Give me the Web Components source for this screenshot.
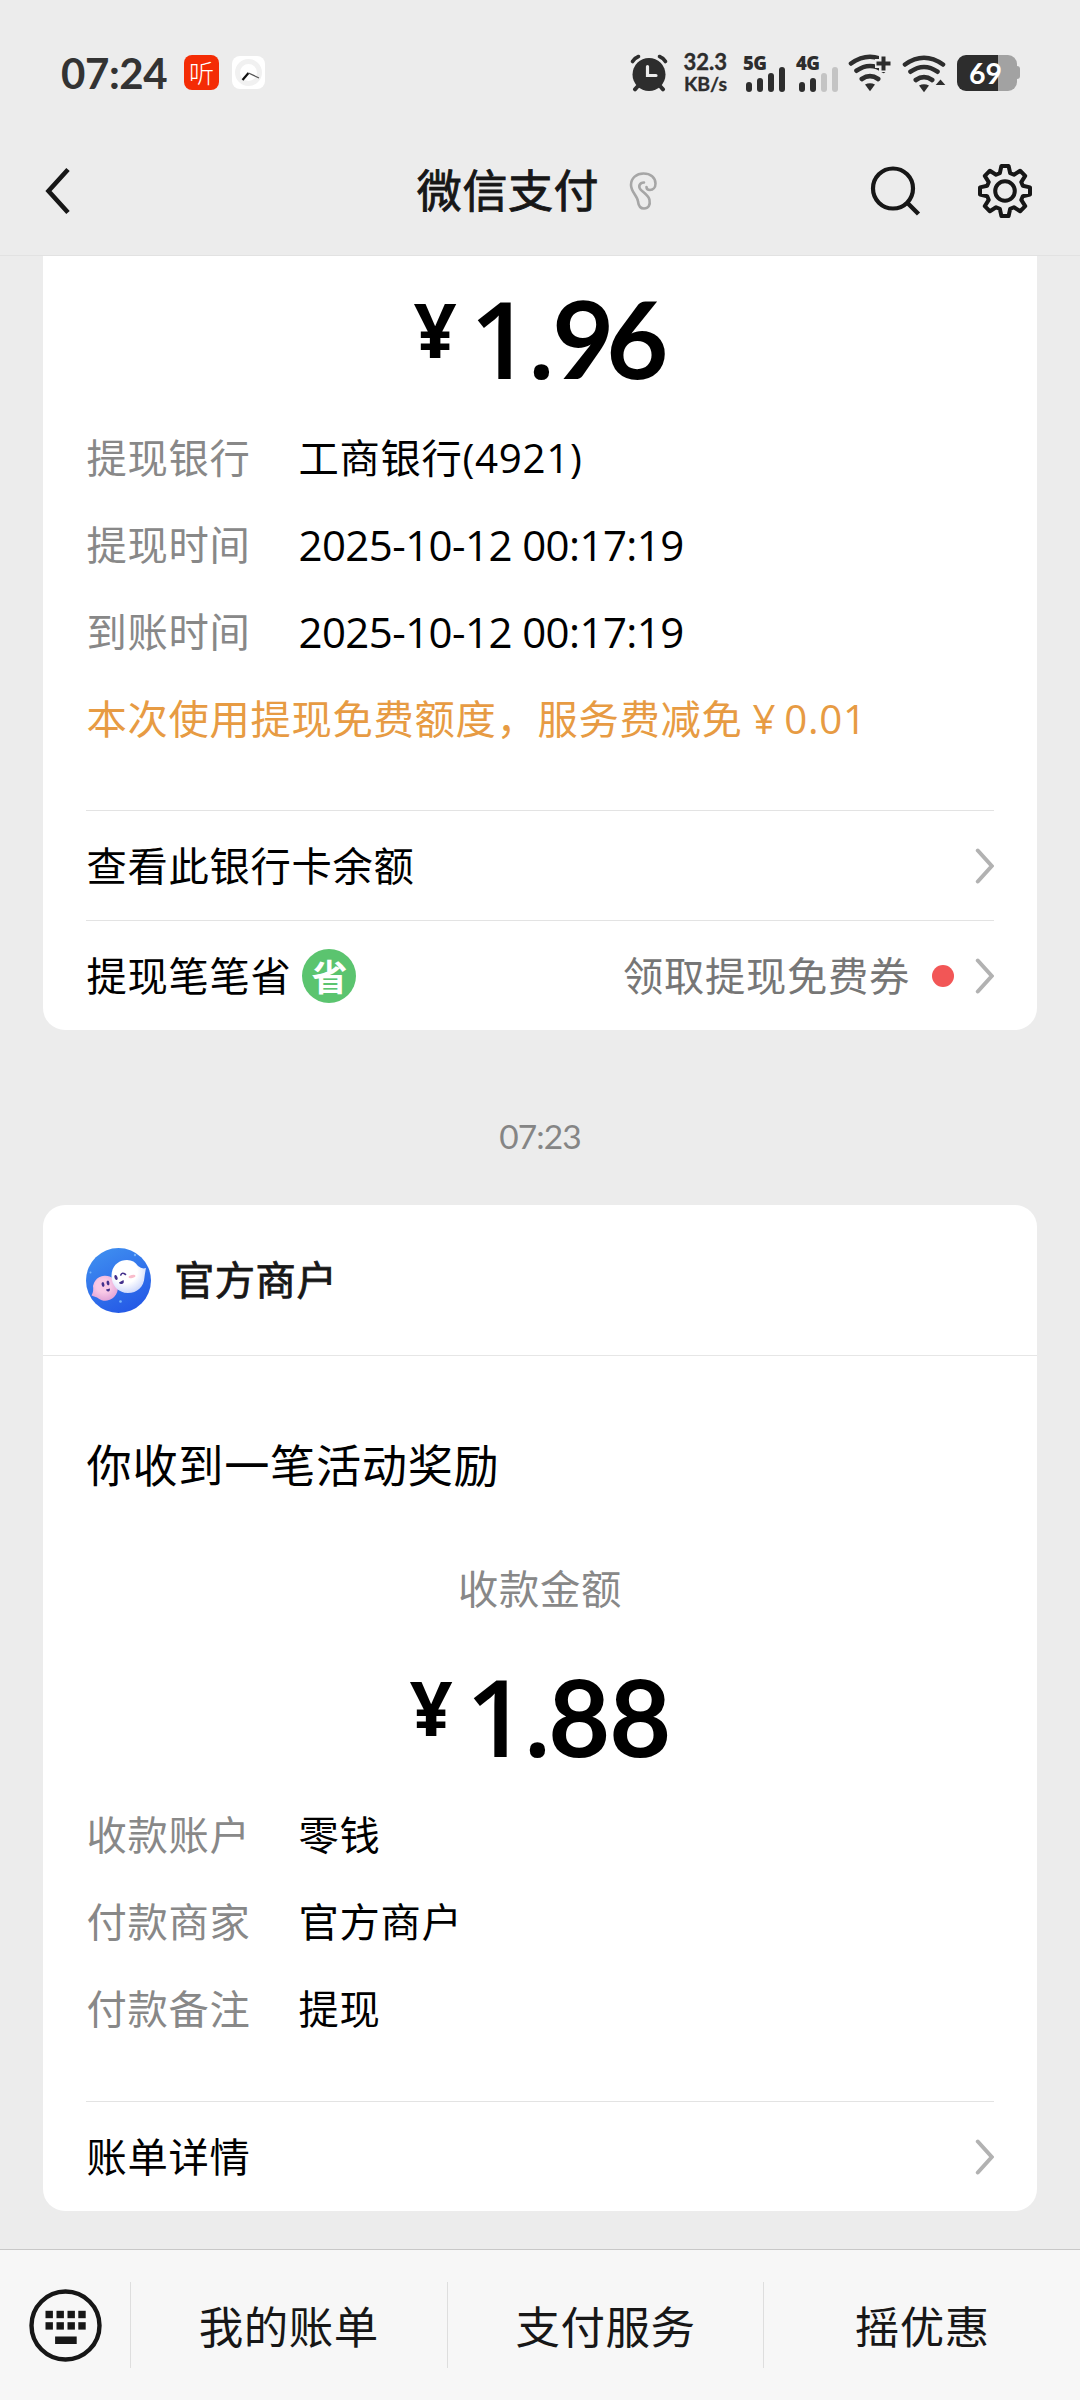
<!DOCTYPE html>
<html lang="zh-CN">
<head>
<meta charset="utf-8">
<title>微信支付</title>
<style>
html,body{margin:0;padding:0;background:#ececec}
body{width:1080px;height:2400px;overflow:hidden;font-family:"Open Sans","Noto Sans CJK SC",sans-serif;color:#000}
</style>
</head>
<body>
<phone-screen>
  <status-bar slot="status"></status-bar>
  <nav-bar slot="nav">微信支付</nav-bar>

  <pay-card cut>
    <money-amount style="height:158.5px;--top:28px;--track:-8px;--end:6px" currency="¥" value="1.96"></money-amount>
    <info-row label="提现银行">工商银行(4921)</info-row>
    <info-row label="提现时间" numeric>2025-10-12 00:17:19</info-row>
    <info-row label="到账时间" numeric>2025-10-12 00:17:19</info-row>
    <note-row>本次使用提现免费额度，服务费减免<span style="margin:0 8px 0 10px">¥</span>0.01</note-row>
    <link-row slot="links">查看此银行卡余额</link-row>
    <link-row slot="links">提现笔笔省<save-badge></save-badge><span slot="extra">领取提现免费券</span><red-dot slot="extra"></red-dot></link-row>
  </pay-card>

  <time-stamp>07:23</time-stamp>

  <pay-card>
    <merchant-head slot="head">官方商户</merchant-head>
    <card-title>你收到一笔活动奖励</card-title>
    <amount-label>收款金额</amount-label>
    <money-amount style="height:171.5px;--top:42px;--track:-1px;--end:0px" currency="¥" value="1.88"></money-amount>
    <info-row label="收款账户">零钱</info-row>
    <info-row label="付款商家">官方商户</info-row>
    <info-row label="付款备注">提现</info-row>
    <link-row slot="links">账单详情</link-row>
  </pay-card>

  <bottom-menu slot="menu">
    <menu-item>我的账单</menu-item>
    <menu-item>支付服务</menu-item>
    <menu-item>摇优惠</menu-item>
  </bottom-menu>
</phone-screen>

<script>
const define = (name, render) => customElements.define(name, class extends HTMLElement {
  constructor() {
    super();
    this.attachShadow({ mode: 'open' });
  }
  connectedCallback() {
    this.shadowRoot.innerHTML = render(this);
  }
});

define('phone-screen', () => `
<style>
:host{display:flex;flex-direction:column;width:1080px;height:2400px;background:#ececec}
main{flex:1;min-height:0;overflow:hidden;display:flex;flex-direction:column}
</style>
<slot name="status"></slot><slot name="nav"></slot>
<main><slot></slot></main>
<slot name="menu"></slot>`);

const wifi = (extra) => `<svg width="48" height="40" viewBox="0 0 48 40" fill="none" stroke="#2d2d2d" stroke-width="4.6" stroke-linecap="round">
<path d="M4 10.5Q23-3 42 10.5M9.5 17.7Q23 8.3 36.5 17.7M14.8 26Q23 20.4 31.2 26"/>
<path d="M18 31.5Q23 28.800 28 31.500L23 38.300Z" fill="#2d2d2d" stroke="none"/>${extra}</svg>`;

define('signal-bars', (el) => {
  const on = +el.getAttribute('level');
  const h = [10, 14, 18.5, 24.5];
  return `
<style>
:host{display:flex;flex-direction:column;width:43px;height:38px;position:relative}
b{font:800 18.500px/18px "Open Sans";color:#2d2d2d;letter-spacing:-.6px}
div{position:absolute;left:3px;bottom:0;display:flex;align-items:flex-end;gap:5px}
i{width:6px;border-radius:3px;background:#2d2d2d}
i.off{background:#c4c4c4}
</style>
<b>${el.getAttribute('net')}</b>
<div>${h.map((v, n) => `<i class="${n < on ? '' : 'off'}" style="height:${v}px"></i>`).join('')}</div>`;
});

define('status-bar', () => `
<style>
:host{display:flex;align-items:center;height:127px;box-sizing:border-box;padding:18px 60px 0 61px;color:#333}
.clock{font:700 42px/50px Lato;width:105px;letter-spacing:-.4px;white-space:nowrap}
.app{width:35px;height:35px;border-radius:8px;background:#f42c05;margin-left:18px;display:flex;align-items:center;justify-content:center;color:#fff;font:300 25px/35px "Noto Sans CJK SC"}
.watch{margin-left:13px}
.right{margin-left:auto;display:flex;align-items:center}
.rate{font:700 19.500px/22px Lato;color:#2d2d2d;text-align:right;width:46px;margin-left:13px;white-space:nowrap;display:flex;flex-direction:column;align-items:flex-end}
.rate div:first-child{font-size:22px;line-height:23px;-webkit-text-stroke:.4px #2d2d2d}
.rate div:last-child{-webkit-text-stroke:.3px #2d2d2d}
.bat{display:flex;align-items:center;width:63px;margin-left:8px}
.cell{width:60px;height:36px;border-radius:9px;background:linear-gradient(90deg,#2d2d2d 41px,#a2a2a2 41px);color:#fff;font:700 28.500px/36px Lato;text-align:center;text-indent:-3px}
.nub{width:3px;height:13px;border-radius:0 4px 4px 0;background:#a2a2a2}
</style>
<span class="clock">07:24</span>
<span class="app">听</span>
<svg class="watch" width="33" height="33" viewBox="0 0 33 33"><rect width="33" height="33" rx="8" fill="#fff"/><circle cx="16.500" cy="16.500" r="11" fill="none" stroke="#f1f1f1" stroke-width="5"/><path d="M10.500 24L16.500 17" stroke="#111" stroke-width="2.200"/><path d="M16.500 17L27 22" stroke="#555" stroke-width="1.300"/></svg>
<div class="right">
<svg width="38" height="38" viewBox="0 0 38 38" fill="none" stroke="#2d2d2d" stroke-linecap="round"><circle cx="19" cy="20.500" r="16.500" fill="#2d2d2d" stroke="none"/><path d="M2.500 7.500Q4.500 4 8.500 2.500M35.500 7.500Q33.500 4 29.500 2.500" stroke-width="3.600"/><path d="M8 32L5 35.300M30 32L33 35.300" stroke-width="4"/><path d="M17.500 12.500V21.500H26" stroke="#ececec" stroke-width="3.200"/></svg>
<div class="rate"><div>32.3</div><div>KB/s</div></div>
<signal-bars net="5G" level="4" style="margin-left:16px"></signal-bars>
<signal-bars net="4G" level="2" style="margin-left:10px"></signal-bars>
<span style="display:flex;margin-left:8px">${wifi('<path d="M36.500 2V19M28 10.500H45" stroke="#ececec" stroke-width="9" stroke-linecap="butt"/><path d="M36.500 3.500V17.500M29.500 10.500H43.500" stroke-width="4" stroke-linecap="butt"/>')}</span>
<span style="display:flex;margin-left:6px;padding-top:2px">${wifi('<path d="M39 28L33 34.500H46Z" fill="#ececec" stroke="#ececec" stroke-width="3"/><path d="M39.500 25.500L44.300 31H34.700Z" fill="#2d2d2d" stroke="none"/>')}</span>
<div class="bat"><div class="cell">69</div><div class="nub"></div></div>
</div>`);

const gear = () => {
  const pts = [];
  for (let k = 0; k < 8; k++) {
    const a = k * Math.PI / 4;
    for (const [x, y] of [[-5.2, -17.8], [-3.6, -25], [3.6, -25], [5.2, -17.8]]) {
      pts.push((x * Math.cos(a) - y * Math.sin(a)).toFixed(2) + ',' + (x * Math.sin(a) + y * Math.cos(a)).toFixed(2));
    }
  }
  return pts.join(' ');
};

define('nav-bar', () => `
<style>
:host{display:grid;grid-template-columns:1fr auto 1fr;align-items:center;height:129px;box-sizing:border-box;border-bottom:1px solid #e2e2e2;color:#171717}
.back{margin-left:44px}
.title{display:flex;align-items:center;font-size:45px;letter-spacing:.6px;line-height:60px;-webkit-text-stroke:.9px #171717;padding:0 3px 1px 0}
.ear{margin-left:30px;width:31px}
.actions{display:flex;justify-content:flex-end;align-items:center;gap:55px;padding-right:46px}
svg{display:block;fill:none;stroke:#171717}
</style>
<svg class="back" width="30" height="50" viewBox="0 0 30 50" stroke-width="4.600"><path d="M24 3.500L4.500 25L24 46.500"/></svg>
<div class="title"><slot></slot>
<svg class="ear" width="31" height="40" viewBox="0 0 31 40" style="stroke:#a6a6a6" stroke-width="2.600" stroke-linecap="round"><path d="M15 11.500C10.500 11.500 9 15.500 11.500 18.500C14 21.500 19.500 24 20.500 29C21.500 34 19.500 37.500 15 37.500C10.500 37.500 9.500 34.500 9 30.500C8.500 25 2 21 2 14C2 7 7.500 2.500 14.500 2.500C21.500 2.500 26.500 6.500 26.500 12.500C26.500 16.500 24 19 21 19C18.500 19 17.500 17.500 17.500 16"/></svg></div>
<div class="actions">
<svg width="52" height="52" viewBox="0 0 52 52" stroke-width="4.200"><circle cx="24" cy="23.500" r="20"/><path d="M38.500 38L49.500 49" stroke-width="4.400"/></svg>
<svg width="58" height="58" viewBox="-29 -29 58 58" stroke-width="4" stroke-linejoin="round"><polygon points="${gear()}"/><circle r="9.800"/></svg>
</div>`);

define('pay-card', (el) => `
<style>
:host{display:flex;flex-direction:column;margin:0 43px;background:#fff;border-radius:${el.hasAttribute('cut') ? '0 0 22px 22px' : '22px'};flex:none}
.body,.links{display:flex;flex-direction:column;padding:0 43px}
.links{padding-top:${el.hasAttribute('cut') ? 47.5 : 48.5}px}
</style>
<slot name="head"></slot>
<div class="body"><slot></slot></div>
<div class="links"><slot name="links"></slot></div>`);

define('money-amount', (el) => {
  const [whole, cents] = el.getAttribute('value').split('.');
  return `
<style>
:host{display:flex;justify-content:center;align-items:flex-start;box-sizing:border-box;padding-top:var(--top);font-weight:600}
.cur{font-size:75px;line-height:75px;font-weight:700;margin-top:7.500px;margin-right:13.500px;letter-spacing:-.5px}
.num{font-size:107px;line-height:107px;letter-spacing:-4px}
.cents{font-family:Lato;font-weight:700;letter-spacing:var(--track);margin-right:var(--end)}
</style>
<span class="cur">${el.getAttribute('currency')}</span><span class="num">${whole}.<span class="cents">${cents}</span></span>`;
});

define('info-row', (el) => `
<style>
:host{display:flex;align-items:center;height:87px;box-sizing:border-box;padding:0 0 1px .5px;font-size:40.300px;letter-spacing:.7px;line-height:60px;white-space:nowrap}
.label{width:212px;color:#888}
.value{${el.hasAttribute('numeric') ? 'font-size:42px;letter-spacing:-.58px' : ''}}
</style>
<span class="label">${el.getAttribute('label')}</span><span class="value"><slot></slot></span>`);

define('note-row', () => `
<style>:host{display:block;height:87px;padding-left:.5px;font-size:40.300px;letter-spacing:.700px;line-height:85px;color:#e79b43;white-space:nowrap}</style><slot></slot>`);

define('link-row', () => `
<style>
:host{display:flex;align-items:center;height:110px;box-sizing:border-box;border-top:1px solid #e3e3e3;font-size:40.300px;letter-spacing:.700px;line-height:60px}
.main{display:flex;align-items:center;flex:1;padding:1px 0 0 .5px}
.extra{display:flex;align-items:center;color:#767676}
svg{display:block;margin-left:20px}
</style>
<span class="main"><slot></slot></span>
<span class="extra"><slot name="extra"></slot></span>
<svg width="20" height="38" viewBox="0 0 20 38" fill="none" stroke="#b2b2b2" stroke-width="4" stroke-linecap="round"><path d="M3.800 3.500L17.800 19L3.800 34.500"/></svg>`);

define('save-badge', () => `
<style>:host{display:flex;align-items:center;justify-content:center;width:54px;height:54px;border-radius:50%;background:#5bc46f;color:#fff;margin-left:11px;font:700 36px/50px "Noto Sans CJK SC";letter-spacing:0;padding-bottom:2px;box-sizing:border-box}</style>省`);

define('red-dot', () => `<style>:host{display:block;width:22px;height:22px;border-radius:50%;background:#f25656;margin-left:22px}</style>`);

define('time-stamp', () => `
<style>:host{display:block;flex:none;box-sizing:border-box;height:175px;padding-top:39px;text-align:center;color:#858585;font:400 33.500px/134px Lato;letter-spacing:-.9px}</style><slot></slot>`);

define('merchant-head', () => `
<style>
:host{display:flex;align-items:center;gap:23px;height:151px;box-sizing:border-box;padding-left:43px;border-bottom:1px solid #e6e6e6;font-size:40.300px;letter-spacing:.500px;line-height:60px;color:#171717;-webkit-text-stroke:.8px #171717}
</style>
<svg width="65" height="65" viewBox="0 0 65 65">
<defs><linearGradient id="sky" x1=".2" y1="0" x2=".7" y2="1"><stop offset="0" stop-color="#3f8ff0"/><stop offset="1" stop-color="#2458e6"/></linearGradient>
<radialGradient id="white" cx=".4" cy=".35" r=".7"><stop offset=".5" stop-color="#fff"/><stop offset="1" stop-color="#c9d4fb"/></radialGradient>
<radialGradient id="pink" cx=".45" cy=".4" r=".65"><stop offset=".4" stop-color="#f9c9e6"/><stop offset="1" stop-color="#dfa0d6"/></radialGradient></defs>
<circle cx="32.500" cy="32.500" r="32.500" fill="url(#sky)"/>
<path d="M5.500 47.500Q8 43 7 38A12.500 12.500 0 1 1 11 49.500Q8 48.500 5.500 47.500Z" fill="url(#pink)"/>
<path d="M52 18Q56 21.500 60 20Q59 25 58.500 29C58 39 51 45 42 45C32 45 25.500 37 25.500 28C25.500 18 32.500 12 41 12C46 12 49.500 14 52 18Z" fill="url(#white)"/>
<g fill="#43308c"><ellipse cx="17" cy="36.500" rx="1.400" ry="2.400" transform="rotate(-12 17 36.500)"/><ellipse cx="22" cy="35" rx="1.400" ry="2.400" transform="rotate(-12 22 35)"/><path d="M20 41.500L24 40.500Q24 44 22 43.500Q20.500 43.500 20 41.500Z"/><ellipse cx="30" cy="29.500" rx="1.500" ry="2.700" transform="rotate(-20 30 29.500)"/><path d="M33 34.500L37.500 32Q38.500 35.500 36 36Q33.500 36.500 33 34.500Z"/></g>
<path d="M34.800 27Q36 23.800 39.500 26.500" fill="none" stroke="#43308c" stroke-width="1.600" stroke-linecap="round"/>
<ellipse cx="46" cy="28.500" rx="3.500" ry="1.500" fill="#f9bccb" transform="rotate(-12 46 28.500)"/>
<g fill="#77b5fb"><circle cx="4.500" cy="24.500" r="1"/><circle cx="34.500" cy="53.500" r="1.300"/><circle cx="49" cy="7" r="1.200"/></g>
</svg><slot></slot>`);

define('card-title', () => `
<style>:host{display:block;padding:80px 0 0 .5px;font-size:45.200px;letter-spacing:.700px;line-height:60px}</style><slot></slot>`);

define('amount-label', () => `
<style>:host{display:block;padding:63px 0 1px;font-size:40.300px;letter-spacing:.700px;line-height:60px;text-align:center;color:#888}</style><slot></slot>`);

define('bottom-menu', () => `
<style>
:host{display:flex;flex:none;align-items:center;height:151px;box-sizing:border-box;border-top:1px solid #c8c8c8;background:#f7f7f7}
svg{display:block;margin:0 27px 0 28px}
</style>
<svg width="75" height="75" viewBox="-37.500 -37.500 75 75"><circle r="34" fill="none" stroke="#171717" stroke-width="4.400"/>
<g fill="#171717">${[-14.7, -7.5].map((y) => [-20, -9, 2, 12.800].map((x) => `<rect x="${x}" y="${y + (y > -10 ? 4.2 : 0)}" width="7.400" height="7.400"/>`).join('')).join('')}<rect x="-10.400" y="11" width="21.600" height="7.500"/></g></svg>
<slot></slot>`);

define('menu-item', () => `
<style>
:host{flex:1;display:flex;align-items:center;justify-content:center;height:86px;border-left:1px solid #dedede;font-size:44.500px;letter-spacing:.500px;line-height:60px;color:#171717;padding-top:4px;box-sizing:border-box}
</style><slot></slot>`);
</script>
</body>
</html>
